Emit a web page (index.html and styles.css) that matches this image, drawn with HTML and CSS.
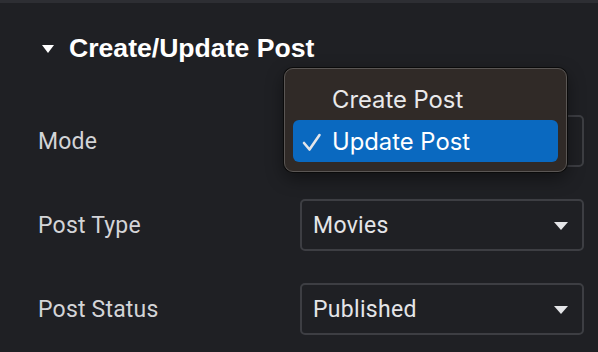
FILE: index.html
```html
<!DOCTYPE html>
<html lang="en">
<head>
    <meta charset="UTF-8">
    <meta name="viewport" content="width=device-width, initial-scale=1.0">
    <title>Create/Update Post</title>
    <link rel="stylesheet" href="styles.css">
</head>
<body>
    <div class="panel">
        <div class="section-head">
            <span class="caret"></span>
            <span>Create/Update Post</span>
        </div>

        <div class="row first">
            <label>Mode</label>
            <div class="select">
                <span>Update Post</span>
                <span class="arrow"></span>

                <!-- open dropdown menu -->
                <div class="menu">
                    <div class="menu-item">Create Post</div>
                    <div class="menu-item selected">
                        <svg class="check" width="20" height="19" viewBox="0 0 20 19">
                            <polyline points="2,10 7.5,16.5 17.5,2" fill="none" stroke="#e4e6ea" stroke-width="2.6" stroke-linecap="round" stroke-linejoin="round"/>
                        </svg>
                        Update Post
                    </div>
                </div>
            </div>
        </div>

        <div class="row">
            <label>Post Type</label>
            <div class="select">
                <span>Movies</span>
                <span class="arrow"></span>
            </div>
        </div>

        <div class="row">
            <label>Post Status</label>
            <div class="select">
                <span>Published</span>
                <span class="arrow"></span>
            </div>
        </div>
    </div>
</body>
</html>
```

FILE: styles.css
```css
html, body {
    margin: 0;
    background-color: #1f2024;
}
.panel {
    border-top: 3px solid #2d2e33;
    height: 349px;
    font-family: Roboto, "Liberation Sans", sans-serif;
}
.section-head {
    display: flex;
    align-items: center;
    margin-top: 30px;
    padding-left: 42px;
    height: 30px;
    color: #fff;
    font-family: "Liberation Sans", Arial, sans-serif;
    font-size: 26.6px;
    font-weight: bold;
}
.caret {
    width: 0;
    height: 0;
    border-left: 6.5px solid transparent;
    border-right: 6.5px solid transparent;
    border-top: 8px solid #fff;
    margin-right: 15px;
    margin-top: 2px;
}
.row {
    display: flex;
    align-items: center;
    height: 52px;
    margin-top: 32px;
    padding-left: 38px;
}
.row.first {
    margin-top: 52px;
}
.row label {
    width: 262px;
    color: #d3d4d7;
    font-size: 23px;
    letter-spacing: 0.2px;
}
.select {
    position: relative;
    display: flex;
    align-items: center;
    justify-content: space-between;
    box-sizing: border-box;
    width: 284px;
    height: 52px;
    padding: 0 14px 0 11px;
    border: 2px solid #3d3e43;
    border-radius: 5px;
    color: #e4e5e8;
    font-size: 23px;
    letter-spacing: 0.3px;
}
.arrow {
    width: 0;
    height: 0;
    border-left: 7px solid transparent;
    border-right: 7px solid transparent;
    border-top: 8px solid #e4e5e8;
    margin-top: 1px;
}
.menu {
    position: absolute;
    left: -18px;
    top: -49px;
    box-sizing: border-box;
    width: 283px;
    height: 104px;
    padding: 9px 8px;
    background-color: #302a27;
    border: 1.5px solid #5a5654;
    border-radius: 9px;
    box-shadow: 0 0 0 1px #0b0b0b, 0 6px 18px rgba(0, 0, 0, 0.45);
    letter-spacing: 0;
    z-index: 10;
}
.menu-item {
    display: flex;
    align-items: center;
    height: 42px;
    padding-left: 39px;
    border-radius: 6px;
    color: #e9e9ea;
    font-family: Inter, "Liberation Sans", sans-serif;
    font-size: 23.8px;
}
.menu-item.selected {
    position: relative;
    background-color: #0a69c0;
    color: #fff;
}
.check {
    position: absolute;
    left: 9px;
    top: 13px;
}
```
